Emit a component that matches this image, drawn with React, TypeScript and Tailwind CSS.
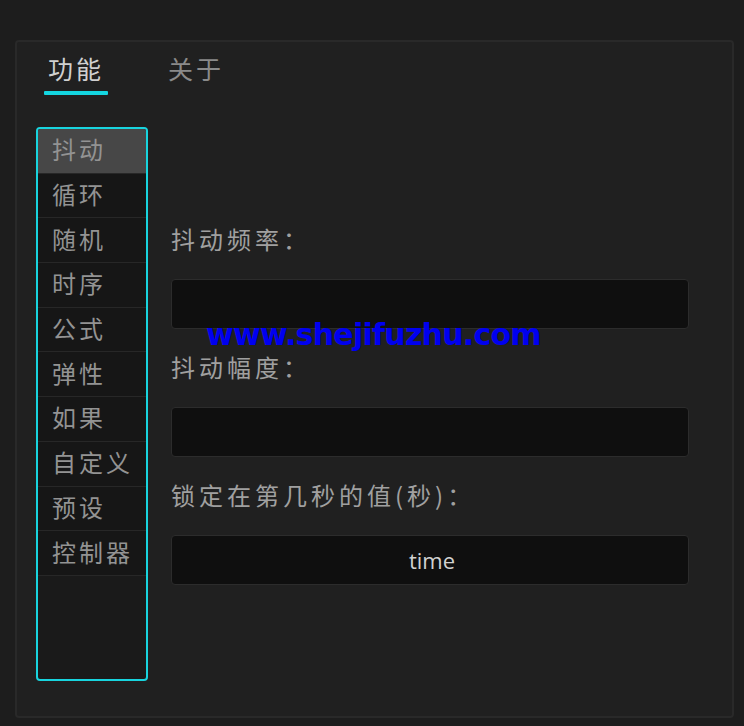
import React, { FC } from 'react'

const cjk = { fontFamily: '"Noto Sans CJK SC", "Noto Sans", sans-serif' }

const menu = ['抖动', '循环', '随机', '时序', '公式', '弹性', '如果', '自定义', '预设', '控制器']

const Field: FC<{ label: string; value?: string; last?: boolean }> = ({ label, value, last }) => (
  <div className={last ? '' : 'mb-[23px]'}>
    <div className="h-[30px] mb-[25px] text-[24px] leading-[30px] tracking-[4px] text-[#a0a0a0]">{label}</div>
    <div className="h-[50px] rounded-[4px] border border-[#2c2c2c] bg-[#0f0f0f] flex items-center justify-center">
      {value && (
        <span className="ml-[4px] text-[22px] text-[#d2d2d2]" style={{ fontFamily: '"Open Sans", "Noto Sans", sans-serif' }}>
          {value}
        </span>
      )}
    </div>
  </div>
)

const App: FC = () => {
  return (
    <div className="relative h-[726px] w-full overflow-hidden bg-[#1d1d1d] pt-[40px] pl-[15px]" style={cjk}>
      <div className="w-[719px] h-[678px] rounded-[4px] border-2 border-[#292929] bg-[#202020]">
        {/* tabs */}
        <div className="flex pt-[11px] pl-[27px]">
          <div className="flex flex-col items-stretch">
            <div className="px-[4px] text-[25px] leading-[30px] tracking-[3px] text-[#d0d0d0]">功能</div>
            <div className="mt-[8px] h-[4px] rounded-[1px] bg-[#14d6e0]" />
          </div>
          <div className="ml-[56px] px-[4px] text-[25px] leading-[30px] tracking-[3px] text-[#8a8a8a]">关于</div>
        </div>

        <div className="flex mt-[32px] ml-[19px]">
          {/* side menu */}
          <div className="w-[112px] h-[554px] rounded-[4px] border-2 border-[#18d4de] bg-[#1a1a1a] overflow-hidden">
            {menu.map((m, i) => (
              <div
                key={m}
                className={
                  'h-[44.7px] flex items-center pl-[14px] pb-[3px] border-b border-[#272727] text-[24px] tracking-[3px] text-[#939393] ' +
                  (i === 0 ? 'bg-[#474747]' : 'bg-[#161616]')
                }
              >
                {m}
              </div>
            ))}
          </div>

          {/* settings */}
          <div className="ml-[23px] w-[518px] pt-[97px]">
            <Field label="抖动频率：" />
            <Field label="抖动幅度：" />
            <Field label="锁定在第几秒的值(秒)：" value="time" last />
          </div>
        </div>
      </div>

      <div
        className="absolute left-[206px] top-[315px] text-[30px] font-bold leading-[40px] tracking-[-0.75px] text-[#0000f0]"
        style={{ fontFamily: '"DejaVu Sans", sans-serif' }}
      >
        www.shejifuzhu.com
      </div>
    </div>
  )
}

export default App
